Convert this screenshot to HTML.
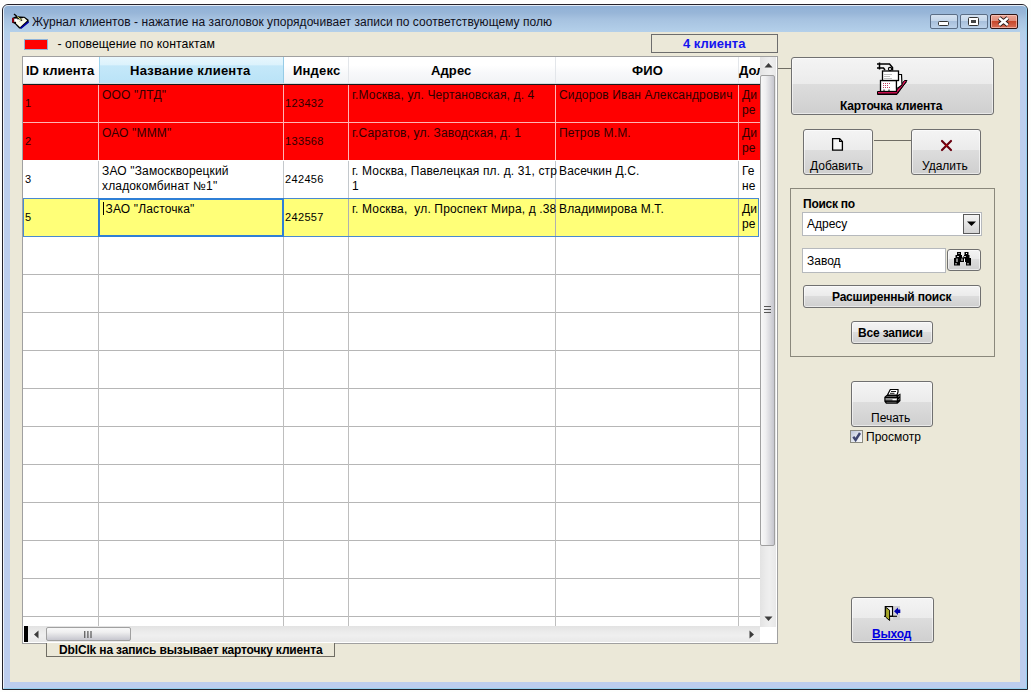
<!DOCTYPE html>
<html><head><meta charset="utf-8">
<style>
*{margin:0;padding:0;box-sizing:border-box}
html,body{width:1031px;height:692px;overflow:hidden;background:#fdfefd;font-family:"Liberation Sans",sans-serif;font-size:12px;color:#000}
.a{position:absolute}
#win{left:2px;top:4px;width:1026px;height:686px;border:1px solid #24222a;border-radius:6px 6px 0 0;background:linear-gradient(#8fb1d6 0px,#98b6d8 8px,#a6c2e0 14px,#b4d0ea 27px,#bccfee 40px,#bccdee 100%)}
#win:before{content:"";position:absolute;left:0;top:0;right:0;bottom:0;border:1px solid rgba(255,255,255,.75);border-right-color:#94d0ee;border-bottom-color:#94d0ee;border-radius:5px 5px 0 0}
#client{left:10px;top:32px;width:1010px;height:650px;background:#ebe8d8}
.title{left:32px;top:15px;font-size:12px;letter-spacing:.05px;color:#101020;white-space:nowrap}
.tb{top:14px;height:15px;width:28px;border:1px solid #5b6e86;border-radius:2px;background:linear-gradient(#d6e3f1 0,#c4d6ea 45%,#a8c0dc 50%,#bcd2ea 100%)}
.tbc{border-color:#2e1414;box-shadow:inset 0 0 0 1px rgba(255,210,200,.6);background:linear-gradient(#eca494 0,#e08e7c 45%,#c8482c 50%,#d87058 100%)}
.btn{border:1px solid #707070;border-radius:3px;box-shadow:inset 0 0 0 1px rgba(255,255,255,.55);background:linear-gradient(#f4f4f4 0,#ebebeb 46%,#dddddd 46%,#cfcfcf 100%)}
.t{white-space:nowrap;position:absolute}
.b{font-weight:bold}
</style></head><body>
<div id="win" class="a"></div>
<div id="client" class="a"></div>
<!-- title icon -->
<svg class="a" style="left:8px;top:10px" width="24" height="22" viewBox="8 10 24 22">
<path d="M12 18 L16 16.2 L24.5 16.8 L28.6 19.8 L28.6 22.2 L20.8 28.6 L19.2 28.6 L15 24 L12 22.6 Z" fill="#000"/>
<path d="M15.8 20 L24 17.8 L27.2 20.6 L20 27.2 L16.2 23.4 Z" fill="#fcfce8"/>
<path d="M19 21.6 L23.6 19.8" stroke="#c8c8b0" stroke-width="0.8"/>
<path d="M20.6 28.4 L28.6 21.8" stroke="#0000a8" stroke-width="1.5"/>
<rect x="12" y="18" width="2.2" height="4.4" fill="#8a0010"/>
<rect x="14.2" y="18.6" width="3.3" height="3.2" fill="#fff"/>
<path d="M14 14 L21.8 20.6" stroke="#000" stroke-width="1.3"/>
<path d="M17.2 16.6 L21 19.6" stroke="#e8f070" stroke-width="1"/>
</svg>
<div class="t title">Журнал клиентов - нажатие на заголовок упорядочивает записи по соответствующему полю</div>
<div class="a tb" style="left:930px"></div>
<div class="a tb" style="left:960px"></div>
<div class="a tb tbc" style="left:990px"></div>
<svg class="a" style="left:930px;top:14px" width="90" height="16" viewBox="930 14 90 16">
<rect x="938.5" y="21.5" width="10" height="4" rx="1" fill="#fff" stroke="#333" stroke-width="1"/>
<rect x="968.5" y="17.5" width="10" height="8" rx="1" fill="#fff" stroke="#333" stroke-width="1"/>
<rect x="971" y="20" width="5" height="3" fill="#444"/>
<path d="M999.2 18 L1007.8 25 M1007.8 18 L999.2 25" stroke="#2a1a1a" stroke-width="4.2"/>
<path d="M999.2 18 L1007.8 25 M1007.8 18 L999.2 25" stroke="#fff" stroke-width="2.4"/>
</svg>
<!-- legend -->
<div class="a" style="left:24px;top:39px;width:24px;height:11px;border:1px solid #8fb4d8;background:#f00"></div>
<div class="t" style="left:57.5px;top:37px;font-size:12.25px;letter-spacing:.06px">- оповещение по контактам</div>
<!-- counter -->
<div class="a" style="left:651px;top:34px;width:127px;height:19px;border:1px solid #6d6d6d;background:#ebe8d8"></div>
<div class="t b" style="left:683px;top:36px;font-size:13px;color:#1414f0">4 клиента</div>

<!-- grid -->
<div class="a" id="grid" style="left:22px;top:56px;width:756px;height:588px;border:1px solid #a0a0a0;background:#fff;overflow:hidden">
  <!-- header -->
  <div class="a" style="left:0;top:0;width:754px;height:27px;background:linear-gradient(#ffffff 0,#ffffff 30%,#f7f8fa 60%,#f1f3f5 100%)"></div>
  <div class="a" style="left:76px;top:0;width:185px;height:26px;background:linear-gradient(#e8f7fd 0,#dcf2fc 30%,#c4e8f9 34%,#bae3f7 100%);border-left:1px solid #9ed4ee;border-right:1px solid #96cbe6"></div>
  <div class="a" style="left:0;top:26px;width:754px;height:1px;background:#d5dadf"></div>
  <div class="a" style="left:0;top:27px;width:754px;height:1px;background:#1a1a1a"></div>
  <div class="a" style="left:325px;top:0;width:1px;height:26px;background:#e3e6ea"></div>
  <div class="a" style="left:532px;top:0;width:1px;height:26px;background:#e3e6ea"></div>
  <div class="a" style="left:715px;top:0;width:1px;height:26px;background:#e3e6ea"></div>
  <div class="t b" style="left:3px;top:6px;font-size:13px">ID клиента</div>
  <div class="t b" style="left:107px;top:6px;font-size:13px;letter-spacing:.25px">Название клиента</div>
  <div class="t b" style="left:270px;top:6px;font-size:13px;letter-spacing:.2px">Индекс</div>
  <div class="t b" style="left:408px;top:6px;font-size:13px;letter-spacing:.1px">Адрес</div>
  <div class="t b" style="left:609px;top:6px;font-size:13px;letter-spacing:.2px">ФИО</div>
  <div class="a" style="left:715px;top:0;width:22px;height:27px;overflow:hidden"><div class="t b" style="left:1px;top:6px;font-size:13px">Должность</div></div>
<div class="a" style="left:0px;top:217px;width:737px;height:1px;background:#b6b6b6"></div>
<div class="a" style="left:0px;top:255px;width:737px;height:1px;background:#b6b6b6"></div>
<div class="a" style="left:0px;top:293px;width:737px;height:1px;background:#b6b6b6"></div>
<div class="a" style="left:0px;top:331px;width:737px;height:1px;background:#b6b6b6"></div>
<div class="a" style="left:0px;top:369px;width:737px;height:1px;background:#b6b6b6"></div>
<div class="a" style="left:0px;top:407px;width:737px;height:1px;background:#b6b6b6"></div>
<div class="a" style="left:0px;top:445px;width:737px;height:1px;background:#b6b6b6"></div>
<div class="a" style="left:0px;top:483px;width:737px;height:1px;background:#b6b6b6"></div>
<div class="a" style="left:0px;top:521px;width:737px;height:1px;background:#b6b6b6"></div>
<div class="a" style="left:0px;top:559px;width:737px;height:1px;background:#b6b6b6"></div>
<div class="a" style="left:75px;top:179px;width:1px;height:390px;background:#bebebe"></div>
<div class="a" style="left:260px;top:179px;width:1px;height:390px;background:#bebebe"></div>
<div class="a" style="left:325px;top:179px;width:1px;height:390px;background:#bebebe"></div>
<div class="a" style="left:532px;top:179px;width:1px;height:390px;background:#bebebe"></div>
<div class="a" style="left:715px;top:179px;width:1px;height:390px;background:#bebebe"></div>
<div class="a" style="left:0px;top:28px;width:737px;height:37px;background:#f00"></div>
<div class="a" style="left:0px;top:66px;width:737px;height:37px;background:#f00"></div>
<div class="a" style="left:0px;top:65px;width:737px;height:1px;background:#ffb4b4"></div>
<div class="a" style="left:75px;top:28px;width:1px;height:75px;background:#ffb4b4"></div>
<div class="a" style="left:260px;top:28px;width:1px;height:75px;background:#ffb4b4"></div>
<div class="a" style="left:325px;top:28px;width:1px;height:75px;background:#ffb4b4"></div>
<div class="a" style="left:532px;top:28px;width:1px;height:75px;background:#ffb4b4"></div>
<div class="a" style="left:715px;top:28px;width:1px;height:75px;background:#ffb4b4"></div>
<div class="a" style="left:75px;top:104px;width:1px;height:37px;background:#c4c8cc"></div>
<div class="a" style="left:260px;top:104px;width:1px;height:37px;background:#c4c8cc"></div>
<div class="a" style="left:325px;top:104px;width:1px;height:37px;background:#c4c8cc"></div>
<div class="a" style="left:532px;top:104px;width:1px;height:37px;background:#c4c8cc"></div>
<div class="a" style="left:715px;top:104px;width:1px;height:37px;background:#c4c8cc"></div>
<div class="a" style="left:0px;top:141px;width:736px;height:39px;background:#ffff78;border:1px solid #4a8ad0"></div>
<div class="a" style="left:260px;top:142px;width:1px;height:37px;background:#b0b0b0"></div>
<div class="a" style="left:325px;top:142px;width:1px;height:37px;background:#b0b0b0"></div>
<div class="a" style="left:532px;top:142px;width:1px;height:37px;background:#b0b0b0"></div>
<div class="a" style="left:715px;top:142px;width:1px;height:37px;background:#b0b0b0"></div>
<div class="a" style="left:75px;top:141px;width:186px;height:39px;border:2px solid #2f7fd6"></div>
<div class="a" style="left:80px;top:145px;width:1px;height:13px;background:#000"></div>
<div class="t" style="left:2px;top:40px;color:#300000;font-size:11px">1</div>
<div class="t" style="left:79px;top:31px;color:#300000;line-height:15px;letter-spacing:.15px;">ООО "ЛТД"</div>
<div class="t" style="left:262px;top:40px;color:#300000;font-size:11px;letter-spacing:.35px">123432</div>
<div class="t" style="left:329px;top:31px;color:#300000;line-height:15px;letter-spacing:.15px;">г.Москва, ул. Чертановская, д. 4</div>
<div class="t" style="left:536px;top:31px;color:#300000;line-height:15px;letter-spacing:.15px;">Сидоров Иван Александрович</div>
<div class="t" style="left:719px;top:31px;color:#300000;line-height:15px;letter-spacing:.15px;">Ди<br>ре</div>
<div class="t" style="left:2px;top:78px;color:#300000;font-size:11px">2</div>
<div class="t" style="left:79px;top:69px;color:#300000;line-height:15px;letter-spacing:.15px;">ОАО "МММ"</div>
<div class="t" style="left:262px;top:78px;color:#300000;font-size:11px;letter-spacing:.35px">133568</div>
<div class="t" style="left:329px;top:69px;color:#300000;line-height:15px;letter-spacing:.15px;">г.Саратов, ул. Заводская, д. 1</div>
<div class="t" style="left:536px;top:69px;color:#300000;line-height:15px;letter-spacing:.15px;">Петров М.М.</div>
<div class="t" style="left:719px;top:69px;color:#300000;line-height:15px;letter-spacing:.15px;">Ди<br>ре</div>
<div class="t" style="left:2px;top:116px;font-size:11px">3</div>
<div class="t" style="left:79px;top:107px;line-height:15px;letter-spacing:.15px;">ЗАО "Замоскворецкий<br>хладокомбинат №1"</div>
<div class="t" style="left:262px;top:116px;font-size:11px;letter-spacing:.35px">242456</div>
<div class="t" style="left:329px;top:107px;line-height:15px;letter-spacing:.15px;">г. Москва, Павелецкая пл. д. 31, стр<br>1</div>
<div class="t" style="left:536px;top:107px;line-height:15px;letter-spacing:.15px;">Васечкин Д.С.</div>
<div class="t" style="left:719px;top:107px;line-height:15px;letter-spacing:.15px;">Ге<br>не</div>
<div class="t" style="left:2px;top:154px;font-size:11px">5</div>
<div class="t" style="left:79px;top:145px;line-height:15px;letter-spacing:.15px;">&nbsp;ЗАО "Ласточка"</div>
<div class="t" style="left:262px;top:154px;font-size:11px;letter-spacing:.35px">242557</div>
<div class="t" style="left:329px;top:145px;line-height:15px;letter-spacing:.15px;">г. Москва,&nbsp; ул. Проспект Мира, д .38</div>
<div class="t" style="left:536px;top:145px;line-height:15px;letter-spacing:.15px;">Владимирова М.Т.</div>
<div class="t" style="left:719px;top:145px;line-height:15px;letter-spacing:.15px;">Ди<br>ре</div>
</div>

<!-- vertical scrollbar -->
<div class="a" style="left:760px;top:57px;width:16px;height:570px;background:linear-gradient(90deg,#e3e3e3 0,#ececec 40%,#efefef 60%,#e8e8e8 100%)"></div>
<div class="a" style="left:776px;top:57px;width:1px;height:586px;background:#fff"></div>
<div class="a" style="left:760px;top:75px;width:15px;height:471px;border:1px solid #a0a0a0;border-radius:2px;background:linear-gradient(90deg,#f8f8f8 0,#efeff0 35%,#dcdce0 65%,#c6c6ce 100%)"></div>
<svg class="a" style="left:764px;top:62px" width="9" height="6"><path d="M0.5 5.5 L4.5 1 L8.5 5.5 Z" fill="#3c3c3c"/></svg>
<svg class="a" style="left:764px;top:616px" width="9" height="6"><path d="M0.5 0.5 L4.5 5 L8.5 0.5 Z" fill="#3c3c3c"/></svg>
<svg class="a" style="left:763px;top:305px" width="10" height="10"><path d="M1 1.5H8M1 4.5H8M1 7.5H8" stroke="#555" stroke-width="1.2"/></svg>
<!-- horizontal scrollbar -->
<div class="a" style="left:28px;top:626px;width:732px;height:16px;background:linear-gradient(#e3e3e3 0,#ececec 40%,#efefef 60%,#e8e8e8 100%)"></div>
<div class="a" style="left:24px;top:626px;width:4px;height:16px;background:#000"></div>
<div class="a" style="left:46px;top:627px;width:85px;height:14px;border:1px solid #a0a0a0;border-radius:2px;background:linear-gradient(#f8f8f8 0,#efeff0 35%,#dcdce0 65%,#c6c6ce 100%)"></div>
<svg class="a" style="left:33px;top:630px" width="6" height="9"><path d="M5.5 0.5 L1 4.5 L5.5 8.5 Z" fill="#3c3c3c"/></svg>
<svg class="a" style="left:749px;top:630px" width="6" height="9"><path d="M0.5 0.5 L5 4.5 L0.5 8.5 Z" fill="#3c3c3c"/></svg>
<svg class="a" style="left:83px;top:630px" width="10" height="9"><path d="M1.75 1V8M4.9 1V8M8 1V8" stroke="#555" stroke-width="1.2"/></svg>
<div class="a" style="left:760px;top:627px;width:16px;height:15px;background:#fff"></div>
<!-- label -->
<div class="a" style="left:46px;top:643px;width:289px;height:14px;border:1px solid #6f6d64;border-top:none;background:#ebe8d8"></div>
<div class="t b" style="left:59px;top:643px;font-size:12px;letter-spacing:-0.15px">DblClk на запись вызывает карточку клиента</div>

<!-- right panel -->
<div class="a" style="left:778px;top:68px;width:13px;height:1px;background:#6f6d64"></div>
<div class="a btn" style="left:791px;top:57px;width:203px;height:58px"></div>
<div class="t b" style="left:840px;top:99px;font-size:12px;letter-spacing:-0.15px">Карточка клиента</div>
<svg class="a" style="left:872px;top:58px" width="40" height="40" viewBox="0 0 40 40">
<path d="M5.5 33.5 H23.5 L32.5 22.5 H35 L25 36.5 H5.5 Z" fill="#e8105a" stroke="#000" stroke-width="1"/><path d="M6 35.8 H24.5 L34.5 24" stroke="#000" stroke-width="0.8" fill="none"/>
<rect x="8.5" y="22.5" width="16" height="11" fill="#fff" stroke="#000" stroke-width="1.3"/>
<path d="M11 25.5h1M13 25.5h1M15 25.5h1M17 25.5h1M11 27.5h1M13 27.5h1M15 27.5h1M11 29.5h1M13 29.5h1M15 29.5h1M17 29.5h1" stroke="#c04060" stroke-width="1"/>
<path d="M12 33 v-1.5 M17 33 v-1.5" stroke="#000" stroke-width="1"/>
<path d="M24.5 16.5 L29.5 16.5 L30 27 L26 30 L24.5 30 Z" fill="#fff" stroke="#000" stroke-width="1.2"/>
<rect x="10.5" y="13" width="16" height="9.5" fill="#fff" stroke="#000" stroke-width="1.3"/>
<path d="M12 16.5h8M12 18.5h6M12 20.5h8" stroke="#b0b0b0" stroke-width="0.8"/>
<path d="M5 6 H17.5 L20.5 9.5 V12.5 M5 10 H11.5 L13 12 M7.5 4.5 V11.5" stroke="#000" stroke-width="1.5" fill="none"/>
<circle cx="18" cy="11" r="1.6" fill="none" stroke="#000" stroke-width="1.1"/>
</svg>

<div class="a btn" style="left:803px;top:129px;width:70px;height:46px"></div>
<div class="t" style="left:810px;top:159px;font-size:12px">Добавить</div>
<svg class="a" style="left:826px;top:134px" width="24" height="22" viewBox="826 134 24 22">
<path d="M832.6 138.6 H839.6 L842.4 141.5 V150.2 H832.6 Z" fill="#f6f6f6" stroke="#000" stroke-width="1.3"/>
<path d="M839.6 138.6 V141.5 H842.4" fill="none" stroke="#000" stroke-width="1.1"/>
</svg>
<div class="a" style="left:874px;top:140px;width:37px;height:1px;background:#6f6d64"></div>
<div class="a btn" style="left:911px;top:129px;width:70px;height:46px"></div>
<div class="t" style="left:922px;top:159px;font-size:12px">Удалить</div>
<svg class="a" style="left:934px;top:134px" width="24" height="22" viewBox="934 134 24 22">
<path d="M942 141 L951 150 M951 141 L942 150" stroke="#6a0010" stroke-width="2.2" stroke-linecap="round"/>
<circle cx="946.5" cy="145.5" r="1" fill="#c00"/>
</svg>

<div class="a" style="left:790px;top:188px;width:205px;height:169px;border:1px solid #8a887c"></div>
<div class="t b" style="left:803px;top:197px;font-size:12px;letter-spacing:-0.25px">Поиск по</div>
<div class="a" style="left:802px;top:212px;width:180px;height:24px;border:1px solid #b6b9bd;background:#fff"></div>
<div class="t" style="left:807px;top:217px;font-size:12px">Адресу</div>
<div class="a" style="left:963px;top:214px;width:17px;height:20px;border:1px solid #5a5a5a;background:linear-gradient(#f4f4f4,#d4d4d4)"></div>
<svg class="a" style="left:967px;top:221px" width="9" height="6"><path d="M0 0.5 H9 L4.5 5 Z" fill="#000"/></svg>
<div class="a" style="left:802px;top:248px;width:144px;height:25px;border:1px solid #b6b9bd;background:#fff"></div>
<div class="t" style="left:807px;top:254px;font-size:12px">Завод</div>
<div class="a btn" style="left:947px;top:249px;width:34px;height:22px"></div>
<svg class="a" style="left:948px;top:248px" width="30" height="22" viewBox="948 248 30 22">
<path d="M957 252 H961 V255 H962 V257.5 H963.5 V256 H964 V255 H964.5 V252 H968.5 V255 H969.5 V258 H971 V265.5 H966 V262 H960 V265.5 H954 V258 H955.5 V255 H957 Z" fill="#000"/>
<rect x="958.5" y="253" width="1" height="1" fill="#fff"/><rect x="966" y="253" width="1" height="1" fill="#fff"/>
<rect x="956.5" y="258.5" width="1" height="3.5" fill="#fff"/><rect x="961.5" y="258.5" width="1" height="2.5" fill="#fff"/>
<rect x="964" y="258.5" width="1" height="3.5" fill="#fff"/>
<rect x="955.5" y="263" width="1" height="1.5" fill="#fff"/><rect x="967.5" y="263" width="1" height="1.5" fill="#fff"/>
<rect x="957" y="256" width="2" height="0.8" fill="#fff"/><rect x="964" y="256" width="2" height="0.8" fill="#fff"/>
</svg>
<div class="a btn" style="left:803px;top:285px;width:178px;height:23px"></div>
<div class="t b" style="left:832px;top:290px;font-size:12px;letter-spacing:-0.2px">Расширенный поиск</div>
<div class="a btn" style="left:851px;top:321px;width:82px;height:23px"></div>
<div class="t b" style="left:858px;top:326px;font-size:12px;letter-spacing:-0.17px">Все записи</div>

<div class="a btn" style="left:851px;top:381px;width:82px;height:46px"></div>
<div class="t" style="left:871px;top:411px;font-size:12px">Печать</div>
<svg class="a" style="left:878px;top:384px" width="30" height="24" viewBox="878 384 30 24">
<path d="M890.3 389.5 H898 V392 L897 395 H887.5 Z" fill="#fff" stroke="#000" stroke-width="1.2"/>
<path d="M891 391.5h5M890 393.3h4.5" stroke="#000" stroke-width="0.9"/>
<path d="M886.5 395 H897.5 L900.5 393.5 V401 L897.5 403.8 H886 L884.3 401.5 V397 Z" fill="#000"/>
<rect x="885.5" y="398" width="11.5" height="2.4" fill="#8c8c8c"/>
<rect x="892.5" y="399" width="4" height="1.2" fill="#fff"/>
<path d="M886.5 396.5h10M886.5 402.3h10" stroke="#777" stroke-width="0.7"/>
<path d="M898 397l2-1.5M898 400l2-1.5" stroke="#888" stroke-width="0.8"/>
</svg>
<div class="a" style="left:850px;top:430px;width:13px;height:13px;border:1px solid #8a8a80;background:linear-gradient(135deg,#bcc4d8 0,#e4e8f0 55%,#fafafa 100%)"></div>
<svg class="a" style="left:851px;top:431px" width="11" height="11"><path d="M2.3 5.8 L4.6 9 L9 2" stroke="#3e4670" stroke-width="2.4" fill="none"/></svg>
<div class="t" style="left:866px;top:430px;font-size:12px">Просмотр</div>

<div class="a btn" style="left:851px;top:597px;width:83px;height:46px"></div>
<div class="t b" style="left:872px;top:627px;font-size:12px;letter-spacing:-0.16px;color:#0000e0;text-decoration:underline">Выход</div>
<svg class="a" style="left:878px;top:600px" width="28" height="24" viewBox="878 600 28 24">
<rect x="893" y="606" width="7" height="14" fill="#d0d0d4"/>
<rect x="885.3" y="606.6" width="7.2" height="9.7" fill="#fff" stroke="#000" stroke-width="1.2"/>
<path d="M884 616.3 H897" stroke="#000" stroke-width="1.1"/>
<path d="M885.6 607.2 L889.6 610.2 V620.5 L885.6 617 Z" fill="#a8a828" stroke="#000" stroke-width="1"/>
<path d="M894 611.3 L898 607.6 V609.6 H900.3 V613 H898 V615 Z" fill="#0000b0"/>
</svg>
</body></html>
